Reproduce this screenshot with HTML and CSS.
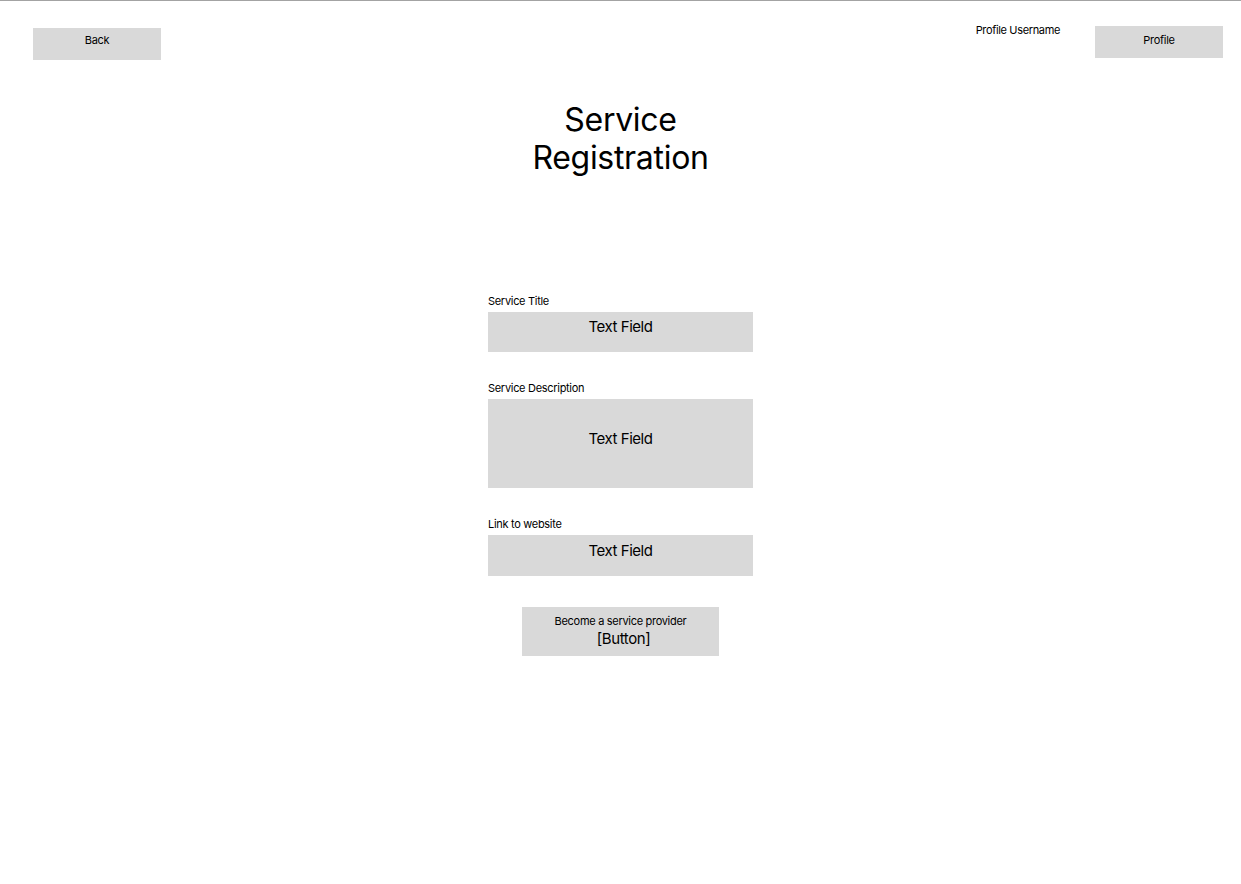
FILE: index.html
```html
<!DOCTYPE html>
<html lang="en">
<head>
<meta charset="utf-8">
<title>Service Registration</title>
<link rel="stylesheet" href="styles.css">
</head>
<body>
<div class="page">
  <header class="topbar">
    <div class="btn back">Back</div>
    <div class="user">
      <span class="username">Profile Username</span>
      <div class="btn profile">Profile</div>
    </div>
  </header>
  <h1 class="title">Service<br>Registration</h1>
  <form class="form">
    <div class="field">
      <div class="label">Service Title</div>
      <div class="box small">Text Field</div>
    </div>
    <div class="field">
      <div class="label">Service Description</div>
      <div class="box large">Text Field</div>
    </div>
    <div class="field">
      <div class="label">Link to website</div>
      <div class="box small link">Text Field</div>
    </div>
    <div class="submit">
      <span class="submit-label">Become a service provider</span>
      <span class="submit-kind">[Button]</span>
    </div>
  </form>
</div>
</body>
</html>
```
FILE: styles.css
```css
* { box-sizing: border-box; }
html, body { margin: 0; padding: 0; background: #fff; }
body {
  font-family: Inter, "Noto Sans", sans-serif;
  color: #000;
  width: 1241px;
  height: 884px;
  overflow: hidden;
}
.page {
  border-top: 1px solid #a3a3a3;
  min-height: 884px;
}
.topbar {
  display: flex;
  justify-content: space-between;
  align-items: flex-start;
  padding: 0 18px 0 33px;
}
.btn {
  background: #d9d9d9;
  width: 128px;
  height: 32px;
  font-size: 11px;
  line-height: 14px;
  letter-spacing: -0.3px;
  text-align: center;
}
.back { margin-top: 27px; padding-top: 5px; }
.user { display: flex; align-items: flex-start; gap: 35px; }
.username {
  font-size: 11px;
  line-height: 14px;
  letter-spacing: -0.35px;
  margin-top: 22px;
}
.profile { margin-top: 25px; padding-top: 7px; }
.title {
  margin: 41px 0 0;
  text-align: center;
  font-size: 32px;
  line-height: 38px;
  font-weight: 400;
  letter-spacing: -0.3px;
}
.form {
  width: 265px;
  margin: 117px auto 0;
  display: flex;
  flex-direction: column;
  gap: 29px;
}
.field { display: flex; flex-direction: column; gap: 4px; }
.label { font-size: 11px; line-height: 14px; letter-spacing: -0.3px; }
.box {
  background: #d9d9d9;
  text-align: center;
  font-size: 15px;
  line-height: 18px;
  letter-spacing: -0.45px;
}
.small { height: 40px; padding-top: 6px; }
.link { height: 41px; padding-top: 7px; }
.large { height: 89px; padding-top: 31px; }
.submit {
  align-self: center;
  width: 197px;
  height: 49px;
  margin-top: 2px;
  background: #d9d9d9;
  display: flex;
  flex-direction: column;
  align-items: center;
  padding-top: 7px;
  gap: 2px;
}
.submit-label { font-size: 11px; line-height: 14px; letter-spacing: -0.3px; }
.submit-kind { font-size: 15px; line-height: 18px; letter-spacing: -0.4px; padding-left: 6px; }
```
